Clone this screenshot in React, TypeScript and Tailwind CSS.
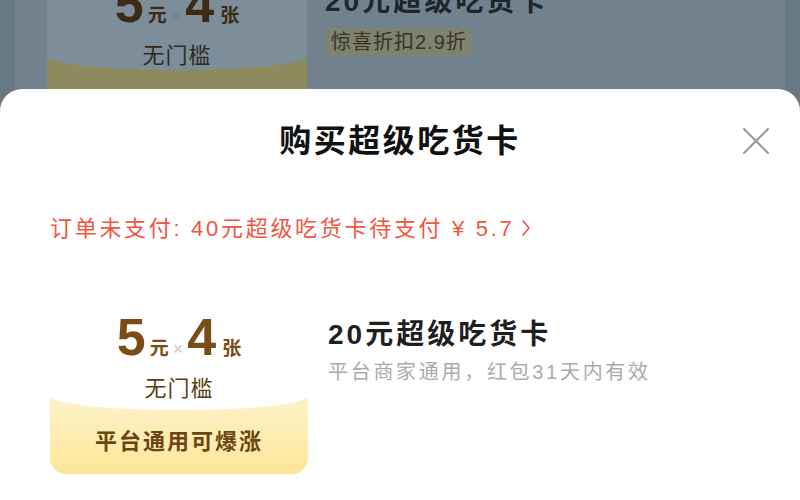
const font = "font-['Liberation_Sans','Noto_Sans_CJK_SC',sans-serif]";

function CloseIcon() {
  return (
    <svg width="28" height="28" viewBox="0 0 28 28" fill="none">
      <path d="M2 2L26 26M26 2L2 26" stroke="#9a9a9a" strokeWidth="2.2" strokeLinecap="round" />
    </svg>
  );
}

function Chevron() {
  return (
    <svg width="10" height="18" viewBox="0 0 10 18" fill="none" className="ml-[6px] inline-block align-[-1px]">
      <path d="M2 2L8 9L2 16" stroke="#f0553f" strokeWidth="1.6" strokeLinecap="round" strokeLinejoin="round" />
    </svg>
  );
}

export default function App() {
  return (
    <div className={`relative h-[500px] w-[800px] overflow-hidden bg-[#687986] ${font}`}>
      {/* page behind the sheet, dimmed */}
      <div className="mx-[15px] flex h-[120px] gap-[18px] bg-[#71828e] pl-[32px]">
        <div className="-mt-[33px] flex w-[260px] flex-col">
          <div className="relative z-10 -mb-[12px] h-[110px] rounded-b-[50%_14px] bg-[#7d8d99] pt-[11px] text-center">
            <div className="flex h-[52px] items-baseline justify-center font-bold text-[#3d2c15]">
              <span className="text-[52px] leading-[52px]">5</span>
              <span className="ml-[4px] text-[19px]">元</span>
              <span className="mx-[4px] text-[18px] font-normal text-[#6f7f8b]">×</span>
              <span className="text-[52px] leading-[52px]">4</span>
              <span className="ml-[6px] text-[19px]">张</span>
            </div>
            <p className="mt-[12px] text-[22px] leading-[28px] tracking-[1px] text-[#2f2a22]">无门槛</p>
          </div>
          <div className="h-[76px] bg-[#8d8b5e]" />
        </div>
        <div className="flex flex-col">
          <p className="-mt-[14px] text-[28px] font-bold leading-[32px] tracking-[3px] text-[#1e252b]">20元超级吃货卡</p>
          <span className="mt-[10px] w-fit rounded-[3px] bg-[#7e8270] px-[6px] py-[2px] text-[20px] leading-[24px] tracking-[1px] text-[#3b3222]">
            惊喜折扣2.9折
          </span>
        </div>
      </div>

      {/* bottom sheet */}
      <div className="absolute inset-x-0 top-[89px] bottom-0 rounded-t-[22px] bg-white">
        <div className="relative pt-[33px] text-center">
          <h1 className="text-[32px] font-bold leading-[38px] tracking-[2.5px] text-[#111]">购买超级吃货卡</h1>
          <button className="absolute right-[30px] top-[38px]">
            <CloseIcon />
          </button>
        </div>

        <p className="mt-[54px] pl-[50px] text-[22px] leading-[30px] tracking-[2.7px] text-[#f0553f]">
          订单未支付: 40元超级吃货卡待支付 ¥ 5.7
          <Chevron />
        </p>

        <div className="mt-[56px] flex gap-[20px] pl-[50px]">
          <div className="flex w-[258px] flex-col">
            <div className="relative z-10 -mb-[12px] h-[110px] rounded-b-[50%_14px] bg-white pt-[11px] text-center">
              <div className="flex h-[52px] items-baseline justify-center font-bold text-[#7a4d16]">
                <span className="text-[52px] leading-[52px]">5</span>
                <span className="ml-[4px] text-[19px]">元</span>
                <span className="mx-[4px] text-[18px] font-normal text-[#d3cabb]">×</span>
                <span className="text-[52px] leading-[52px]">4</span>
                <span className="ml-[6px] text-[19px]">张</span>
              </div>
              <p className="mt-[12px] text-[22px] leading-[28px] tracking-[1px] text-[#5a3c18]">无门槛</p>
            </div>
            <div className="flex h-[76px] items-center justify-center rounded-b-[16px] bg-[linear-gradient(180deg,#fdf3c9_0%,#fdeaa6_70%,#fbe596_100%)] pt-[12px]">
              <span className="text-[22px] font-bold leading-[28px] tracking-[2px] text-[#6b4513]">平台通用可爆涨</span>
            </div>
          </div>
          <div className="flex flex-col pt-[19px]">
            <p className="text-[28px] font-bold leading-[32px] tracking-[3px] text-[#1f1f1f]">20元超级吃货卡</p>
            <p className="mt-[8px] text-[20px] leading-[26px] tracking-[2.7px] text-[#ababab]">平台商家通用，红包31天内有效</p>
          </div>
        </div>
      </div>
    </div>
  );
}
